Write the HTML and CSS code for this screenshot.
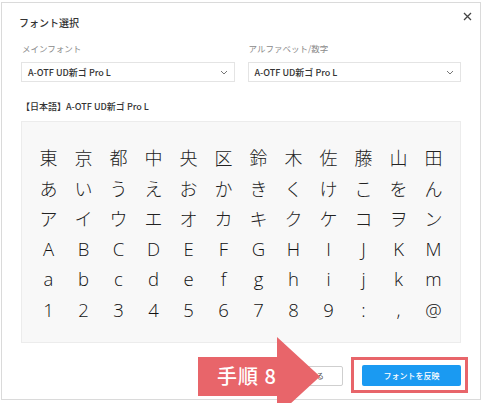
FILE: index.html
```html
<!DOCTYPE html>
<html lang="ja">
<head>
<meta charset="utf-8">
<title>フォント選択</title>
<link rel="stylesheet" href="styles.css">
</head>
<body>
<div class="modal">
  <div class="modal-header">
    <h1 class="modal-title">フォント選択</h1>
    <button class="close-btn" aria-label="閉じる">
      <svg width="9" height="9" viewBox="0 0 9 9"><path d="M1 1 L8 8 M8 1 L1 8" stroke="#444" stroke-width="1.3" fill="none"/></svg>
    </button>
  </div>

  <div class="font-fields">
    <div class="field">
      <div class="field-label">メインフォント</div>
      <div class="select">
        <span>A-OTF UD新ゴ Pro L</span>
        <svg class="chevron" width="8" height="5" viewBox="0 0 8 5"><path d="M1 1 L4 4 L7 1" stroke="#777" stroke-width="1" fill="none"/></svg>
      </div>
    </div>
    <div class="field">
      <div class="field-label">アルファベット/数字</div>
      <div class="select">
        <span>A-OTF UD新ゴ Pro L</span>
        <svg class="chevron" width="8" height="5" viewBox="0 0 8 5"><path d="M1 1 L4 4 L7 1" stroke="#777" stroke-width="1" fill="none"/></svg>
      </div>
    </div>
  </div>

  <div class="preview-label">【日本語】A-OTF UD新ゴ Pro L</div>

  <div class="preview">
    <span>東</span><span>京</span><span>都</span><span>中</span><span>央</span><span>区</span><span>鈴</span><span>木</span><span>佐</span><span>藤</span><span>山</span><span>田</span>
    <span>あ</span><span>い</span><span>う</span><span>え</span><span>お</span><span>か</span><span>き</span><span>く</span><span>け</span><span>こ</span><span>を</span><span>ん</span>
    <span>ア</span><span>イ</span><span>ウ</span><span>エ</span><span>オ</span><span>カ</span><span>キ</span><span>ク</span><span>ケ</span><span>コ</span><span>ヲ</span><span>ン</span>
    <span class="latin">A</span><span class="latin">B</span><span class="latin">C</span><span class="latin">D</span><span class="latin">E</span><span class="latin">F</span><span class="latin">G</span><span class="latin">H</span><span class="latin">I</span><span class="latin">J</span><span class="latin">K</span><span class="latin">M</span>
    <span class="latin">a</span><span class="latin">b</span><span class="latin">c</span><span class="latin">d</span><span class="latin">e</span><span class="latin">f</span><span class="latin">g</span><span class="latin">h</span><span class="latin">i</span><span class="latin">j</span><span class="latin">k</span><span class="latin">m</span>
    <span class="latin">1</span><span class="latin">2</span><span class="latin">3</span><span class="latin">4</span><span class="latin">5</span><span class="latin">6</span><span class="latin">7</span><span class="latin">8</span><span class="latin">9</span><span class="latin">:</span><span class="latin">,</span><span class="latin">@</span>
  </div>

  <div class="modal-footer">
    <button class="btn btn-cancel">閉じる</button>
    <button class="btn btn-primary">フォントを反映</button>
  </div>
</div>

<!-- step annotation drawn over the dialog -->
<div class="step-arrow">
  <svg width="124" height="70" viewBox="0 0 124 70">
    <polygon points="0,20 79,20 79,0 122,39.5 79,79 79,59 0,59" fill="#e8656a"/>
  </svg>
  <span class="step-text">手順 8</span>
</div>
<div class="step-highlight"></div>
</body>
</html>
```

FILE: styles.css
```css
* {
  box-sizing: border-box;
}

html, body {
  margin: 0;
  background: #fff;
}

body {
  padding: 2px 0 0 1px;
  font-family: "Noto Sans CJK JP", "Noto Sans", sans-serif;
  color: #333;
  position: relative;
  width: 485px;
  height: 403px;
  overflow: hidden;
}

.modal {
  width: 480px;
  height: 398px;
  border: 1px solid #dadada;
  background: #fff;
  padding: 13px 19px 13px 19px;
  display: flex;
  flex-direction: column;
}

.modal-header {
  display: flex;
  justify-content: space-between;
  align-items: flex-start;
  height: 14px;
}

.modal-title {
  margin: 0 0 0 -2px;
  font-size: 10px;
  line-height: 14px;
  font-weight: 500;
  color: #333;
}

.close-btn {
  border: 0;
  background: none;
  padding: 0;
  width: 9px;
  height: 9px;
  margin: -4px -11px 0 0;
  display: flex;
}

.font-fields {
  display: grid;
  grid-template-columns: 1fr 1fr;
  column-gap: 13px;
  margin-top: 12px;
}

.field-label {
  font-size: 8.5px;
  line-height: 12px;
  color: #8a8a8a;
  padding-left: 1px;
}

.select {
  margin-top: 8px;
  height: 20px;
  border: 1px solid #e4e4e4;
  display: flex;
  align-items: center;
  justify-content: space-between;
  padding: 0 6px 0 6px;
  font-size: 9px;
  font-weight: 500;
  color: #333;
}

.chevron {
  display: block;
}

.preview-label {
  margin-top: 19px;
  font-size: 9px;
  line-height: 12px;
  font-weight: 500;
  color: #333;
}

.preview {
  margin-top: 8px;
  height: 222px;
  border: 1px solid #ececec;
  background: #f8f8f8;
  padding: 20px 9px 0 9px;
  display: grid;
  grid-template-columns: repeat(12, 1fr);
  grid-auto-rows: 30.5px;
  align-content: start;
  font-size: 18px;
  font-weight: 300;
  color: #222;
}

.preview span {
  display: flex;
  align-items: center;
  justify-content: center;
  line-height: 30.5px;
}

.preview .latin {
  font-family: "Open Sans", "Noto Sans", sans-serif;
  font-weight: 300;
  font-size: 18.5px;
  color: #111;
}

.modal-footer {
  margin-top: 22px;
  display: flex;
  justify-content: flex-end;
  align-items: center;
  gap: 19px;
}

.btn {
  font-family: inherit;
  font-size: 8px;
  height: 21px;
  border-radius: 2px;
  padding: 0;
}

.btn-cancel {
  width: 62px;
  height: 20px;
  background: #fff;
  border: 1px solid #cfcfcf;
  color: #555;
}

.btn-primary {
  width: 99px;
  background: #1a9af2;
  border: 0;
  color: #fff;
  font-weight: 500;
}

/* annotation overlay */
.step-arrow {
  position: absolute;
  left: 198px;
  top: 337px;
  width: 124px;
  height: 70px;
}

.step-arrow svg {
  display: block;
}

.step-text {
  position: absolute;
  left: 19px;
  top: 26px;
  font-size: 20px;
  line-height: 26px;
  font-weight: 500;
  letter-spacing: 1px;
  color: #fff;
  white-space: nowrap;
}

.step-highlight {
  position: absolute;
  left: 351px;
  top: 357px;
  width: 117px;
  height: 36px;
  border: 3px solid #e8656a;
}
```
